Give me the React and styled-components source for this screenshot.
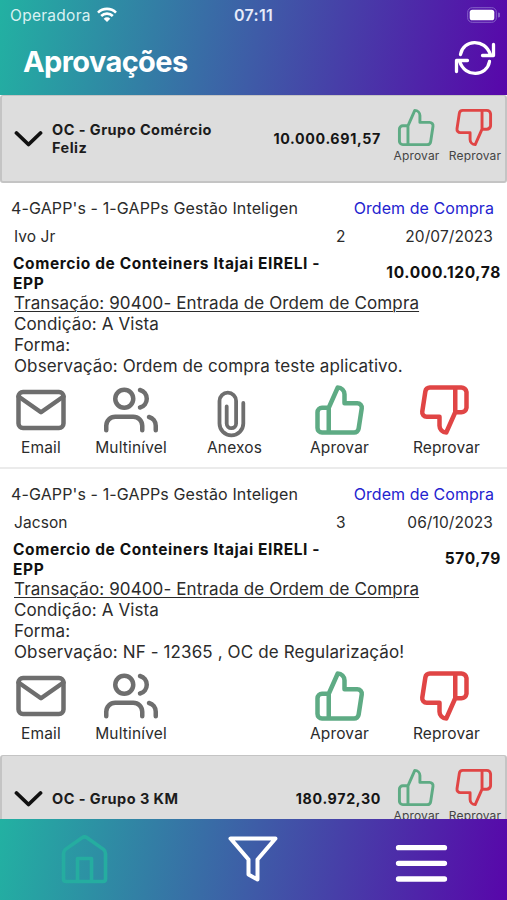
import React from "react";
import styled, { createGlobalStyle } from "styled-components";

const Global = createGlobalStyle`
  * { box-sizing: border-box; }
  body { margin: 0; background: #fff; font-family: Inter, "Liberation Sans", sans-serif; color: #2b2b2b; }
`;
const gradient = "linear-gradient(100deg, #22b1a2 0%, #3e5ca7 50%, #5806aa 100%)";

const Screen = styled.div`
  height: 900px;
  width: 507px;
  display: flex;
  flex-direction: column;
  overflow: hidden;
`;
const Header = styled.header`
  height: 95px;
  flex: none;
  background: ${gradient};
  color: #fff;
`;
const StatusBar = styled.div`
  height: 30px;
  display: grid;
  grid-template-columns: 1fr auto 1fr;
  align-items: center;
  padding: 0 7px 0 10px;
`;
const Carrier = styled.div`
  display: flex;
  align-items: center;
  gap: 6px;
  font-size: 15.5px;
  letter-spacing: 0.28px;
  color: #d9f1f2;
`;
const Clock = styled.div`
  font-size: 16px;
  font-weight: 600;
  letter-spacing: 0.3px;
  color: #e6ebfa;
  margin-right: 3px;
`;
const Battery = styled.div`
  justify-self: end;
  display: flex;
  margin-top: -1px;
`;
const TitleBar = styled.div`
  height: 62px;
  display: flex;
  justify-content: space-between;
  align-items: center;
  padding: 0 11px 0 23px;
`;
const Title = styled.h1`
  margin: 0;
  font-size: 29px;
  font-weight: 700;
  letter-spacing: -0.6px;
`;
const Refresh = styled.div`
  margin-bottom: 6px;
`;
const Content = styled.main`
  flex: 1;
  min-height: 0;
  overflow: hidden;
`;
const Group = styled.section`
  height: 88px;
  background: #dddddd;
  border: 2px solid #c4c4c4;
  border-top-width: 1px;
  border-radius: 3px;
  display: grid;
  grid-template-columns: 49px 190px 1fr 57px 60px;
  align-items: center;
  padding-left: 1px;
`;
const Chevron = styled.svg`
  margin-left: 11px;
  display: block;
`;
const GroupName = styled.div`
  font-size: 14.5px;
  line-height: 18px;
  font-weight: 700;
  letter-spacing: 0.46px;
  color: #1c1c1c;
`;
const GroupTotal = styled.div`
  font-size: 14.25px;
  font-weight: 700;
  letter-spacing: 0.65px;
  color: #151515;
  text-align: right;
  padding-right: 7px;
`;
const GroupAction = styled.div`
  align-self: start;
  padding-top: 11px;
  display: flex;
  flex-direction: column;
  align-items: center;
  font-size: 12px;
  line-height: 16px;
  letter-spacing: 0.15px;
  white-space: nowrap;
  color: #444;
  & > svg { margin-right: ${(p) => p.$inset || 0}px; }
`;
const Card = styled.article`
  height: ${(p) => p.$height}px;
  border-bottom: ${(p) => (p.$last ? "none" : "2px solid #ebebeb")};
  padding-top: 14px;
`;
const Line = styled.div`
  display: flex;
  justify-content: space-between;
  font-size: 16px;
  line-height: 22px;
  letter-spacing: 0.12px;
  padding: 0 13px 0 11px;
  white-space: nowrap;
`;
const Kind = styled.span`
  color: #2323cf;
  letter-spacing: 0.06px;
`;
const Person = styled.div`
  display: grid;
  grid-template-columns: 1fr 32px 125px;
  padding: 0 14px 0 14px;
  margin-top: 7px;
  font-size: 15.5px;
  line-height: 22px;
  letter-spacing: 0.08px;
  & > :last-child { text-align: right; }
`;
const Supplier = styled.div`
  display: flex;
  justify-content: space-between;
  align-items: center;
  margin-top: 6px;
  padding: 0 7px 0 13px;
  font-size: 15.5px;
  line-height: 19.5px;
  font-weight: 700;
  letter-spacing: 0.6px;
  color: #111;
`;
const SupplierName = styled.div`
  width: 325px;
`;
const Amount = styled.div`
  font-size: 15.5px;
  letter-spacing: 0.65px;
  margin-right: -1px;
  padding-bottom: 2px;
`;
const Details = styled.div`
  padding-left: 14px;
  font-size: 17px;
  line-height: 21px;
  letter-spacing: 0.12px;
  white-space: nowrap;
`;
const Transaction = styled.div`
  text-decoration: underline;
  text-underline-offset: 2px;
  text-decoration-thickness: 1px;
`;
const Actions = styled.div`
  display: grid;
  grid-template-columns: 82px 98px 109px 101px 113px;
  margin-top: 6px;
`;
const Action = styled.div`
  grid-column: ${(p) => p.$column};
  display: flex;
  flex-direction: column;
  align-items: center;
  font-size: 15.5px;
  line-height: 22px;
  letter-spacing: 0.15px;
  & > svg { margin-right: ${(p) => p.$inset || 0}px; }
`;
const Nav = styled.nav`
  height: 81px;
  flex: none;
  background: ${gradient};
  display: grid;
  grid-template-columns: repeat(3, 1fr);
  justify-items: center;
  padding: 14px 1px 0 0;
`;
const Glyph = styled.svg`
  display: block;
  overflow: visible;
  fill: none;
  stroke: ${(p) => p.$color};
  stroke-width: ${(p) => p.$weight || 2};
  stroke-linecap: round;
  stroke-linejoin: round;
`;

const GREEN = "#5eab84";
const RED = "#e04545";
const GRAY = "#6e6e6e";

const ThumbUp = ({ size, weight }) => (
  <Glyph $color={GREEN} $weight={weight} width={size} height={size} viewBox="0 0 24 24">
    <path d="M14 9V5a3 3 0 0 0-3-3l-4 9v11h11.28a2 2 0 0 0 2-1.7l1.38-9a2 2 0 0 0-2-2.3zM7 22H4a2 2 0 0 1-2-2v-7a2 2 0 0 1 2-2h3" />
  </Glyph>
);
const ThumbDown = ({ size, weight }) => (
  <Glyph $color={RED} $weight={weight} width={size} height={size} viewBox="0 0 24 24">
    <path d="M10 15v4a3 3 0 0 0 3 3l4-9V2H5.72a2 2 0 0 0-2 1.7l-1.38 9a2 2 0 0 0 2 2.3zm7-13h2.67A2.31 2.31 0 0 1 22 4v7a2.31 2.31 0 0 1-2.33 2H17" />
  </Glyph>
);
const Mail = () => (
  <Glyph $color={GRAY} width="54" height="54" viewBox="0 0 24 24">
    <path d="M4 4h16a2 2 0 0 1 2 2v12a2 2 0 0 1-2 2H4a2 2 0 0 1-2-2V6a2 2 0 0 1 2-2z" />
    <path d="M22 6l-10 7L2 6" />
  </Glyph>
);
const Users = () => (
  <Glyph $color={GRAY} width="54" height="54" viewBox="0 0 24 24">
    <path d="M17 21v-2a4 4 0 0 0-4-4H5a4 4 0 0 0-4 4v2" />
    <circle cx="9" cy="7" r="4" />
    <path d="M23 21v-2a4 4 0 0 0-3-3.87M16 3.13a4 4 0 0 1 0 7.75" />
  </Glyph>
);
const Clip = () => (
  <Glyph $color={GRAY} $weight={3.8} width="54" height="54" viewBox="0 0 54 54">
    <path d="M35.3 20v20.500a11.900 11.900 0 0 1-23.800 0V18a8.300 8.300 0 0 1 16.600 0V40.500a4.700 4.700 0 0 1-9.400 0V23.500" />
  </Glyph>
);

const GroupRow = ({ name, total }) => (
  <Group>
    <Chevron width="29" height="18" viewBox="0 0 29 18">
      <path d="M2.500 3L14.500 14.500L26.500 3" fill="none" stroke="#111" strokeWidth="3.800" strokeLinecap="round" strokeLinejoin="round" />
    </Chevron>
    <GroupName>{name}</GroupName>
    <GroupTotal>{total}</GroupTotal>
    <GroupAction $inset={1}><ThumbUp size={41} weight={1.7} />Aprovar</GroupAction>
    <GroupAction $inset={4}><ThumbDown size={41} weight={1.7} />Reprovar</GroupAction>
  </Group>
);

const Order = ({ person, level, date, amount, note, attachments, height, last }) => (
  <Card $height={height} $last={last}>
    <Line><span>4-GAPP's - 1-GAPPs Gestão Inteligen</span><Kind>Ordem de Compra</Kind></Line>
    <Person><span>{person}</span><span>{level}</span><span>{date}</span></Person>
    <Supplier>
      <SupplierName>Comercio de Conteiners Itajai EIRELI - EPP</SupplierName>
      <Amount>{amount}</Amount>
    </Supplier>
    <Details>
      <Transaction>Transação: 90400- Entrada de Ordem de Compra</Transaction>
      <div>Condição: A Vista</div>
      <div>Forma:</div>
      <div>Observação: {note}</div>
    </Details>
    <Actions>
      <Action $column={1}><Mail />Email</Action>
      <Action $column={2}><Users />Multinível</Action>
      {attachments && <Action $column={3}><Clip />Anexos</Action>}
      <Action $column={4}><ThumbUp size={54} />Aprovar</Action>
      <Action $column={5} $inset={5}><ThumbDown size={54} />Reprovar</Action>
    </Actions>
  </Card>
);

export default function App() {
  return (
    <Screen>
      <Global />
      <Header>
        <StatusBar>
          <Carrier>
            Operadora
            <svg width="20" height="16" viewBox="0 0 20 16" fill="none" stroke="#fff" strokeWidth="2.600">
              <path d="M1 5.600a12.800 12.800 0 0 1 18 0M4.200 9a8.200 8.200 0 0 1 11.600 0" />
              <path d="M10 15L6.700 11.700a4.700 4.700 0 0 1 6.600 0z" fill="#fff" stroke="none" />
            </svg>
          </Carrier>
          <Clock>07:11</Clock>
          <Battery>
            <svg width="33" height="16" viewBox="0 0 33 16">
              <rect x="0.700" y="0.700" width="28.600" height="14.600" rx="4.500" fill="none" stroke="#8560c8" strokeWidth="1" />
              <rect x="2.700" y="2.700" width="24.600" height="10.600" rx="2.600" fill="#fff" />
              <path d="M31 5.500a2.500 2.500 0 0 1 0 5z" fill="#8560c8" />
            </svg>
          </Battery>
        </StatusBar>
        <TitleBar>
          <Title>Aprovações</Title>
          <Refresh>
            <Glyph $color="#fff" $weight={3.3} width="42" height="36" viewBox="0 0 42 36">
              <path d="M6.500 14.500C9 -0.500 31 -2.500 36.500 15M39.500 4.500V15.500H28.500" />
              <path d="M35.500 21.500C33 36.500 11 38.500 5.500 21M2.500 31.500V20.500H13.500" />
            </Glyph>
          </Refresh>
        </TitleBar>
      </Header>
      <Content>
        <GroupRow name="OC - Grupo Comércio Feliz" total="10.000.691,57" />
        <Order person="Ivo Jr" level="2" date="20/07/2023" amount="10.000.120,78" note="Ordem de compra teste aplicativo." attachments height={286} />
        <Order person="Jacson" level="3" date="06/10/2023" amount="570,79" note="NF - 12365 , OC de Regularização!" height={286} last />
        <GroupRow name="OC - Grupo 3 KM" total="180.972,30" />
      </Content>
      <Nav>
        <Glyph $color="#25ada0" $weight={3.6} width="54" height="54" viewBox="0 0 54 54">
          <path d="M6.500 20.500Q6.500 18 8.500 16.400L25 4.800Q27.500 3 30 4.800L46.500 16.400Q48.500 18 48.500 20.500V46Q48.500 48.500 46 48.500H9Q6.500 48.500 6.500 46ZM20.500 48.500V25.500H34.500V48.500" />
        </Glyph>
        <Glyph $color="#fff" $weight={4} width="54" height="54" viewBox="0 0 54 54">
          <path d="M4.500 5.500H49.500L31.500 26.500V46.500L22.500 41.500V26.500Z" />
        </Glyph>
        <Glyph $color="#fff" $weight={5.3} width="54" height="54" viewBox="0 0 54 54">
          <path d="M3.500 14.700H49.500M3.500 30.300H49.500M3.500 46H49.500" />
        </Glyph>
      </Nav>
    </Screen>
  );
}
